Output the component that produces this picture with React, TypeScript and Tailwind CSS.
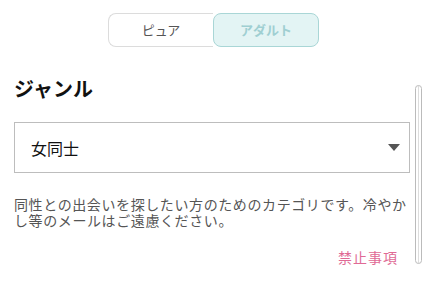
import React from "react";

export default function App() {
  const font = { fontFamily: '"Noto Sans CJK JP", "Noto Sans", sans-serif' };
  return (
    <div className="relative w-[426px] h-[288px] bg-white overflow-hidden" style={font}>
      <div className="flex justify-center pt-[13px] pl-[1px]">
        <div className="flex h-[34px] w-[211px]">
          <div className="flex-1 flex items-center justify-center border border-[#dcdcdc] border-r-0 rounded-l-[8px] text-[13px] text-[#555]">
            ピュア
          </div>
          <div className="flex-1 flex items-center justify-center border border-[#a9d6d6] bg-[#e3f4f4] rounded-[8px] text-[13px] font-bold text-[#9fcfd2]">
            アダルト
          </div>
        </div>
      </div>
      <div className="px-[14px] pr-[16px]">
        <div className="mt-[30px] text-[20px] font-bold text-[#111] leading-[24px]">ジャンル</div>
        <div className="mt-[21px] h-[51px] border border-[#bdbdbd] flex items-center justify-between pl-[16px] pr-[9px]">
          <span className="text-[16px] text-[#111]">女同士</span>
          <svg width="12" height="8" viewBox="0 0 12 8">
            <path d="M0 0 L12 0 L6 7 Z" fill="#555" />
          </svg>
        </div>
        <p className="mt-[23px] text-[14px] leading-[16px] text-[#555] tracking-[0.6px]">
          同性との出会いを探したい方のためのカテゴリです。冷やかし等のメールはご遠慮ください。
        </p>
        <div className="mt-[19px] flex justify-end pr-[12px]">
          <span className="text-[14px] leading-[20px] text-[#e06a95] tracking-[1px]">禁止事項</span>
        </div>
      </div>
      <div className="absolute left-[415px] top-[85px] w-[7px] h-[179px] rounded-full border border-[#bbb] bg-white flex justify-center">
        <div className="w-[1px] h-full bg-[#ddd]" />
      </div>
    </div>
  );
}
